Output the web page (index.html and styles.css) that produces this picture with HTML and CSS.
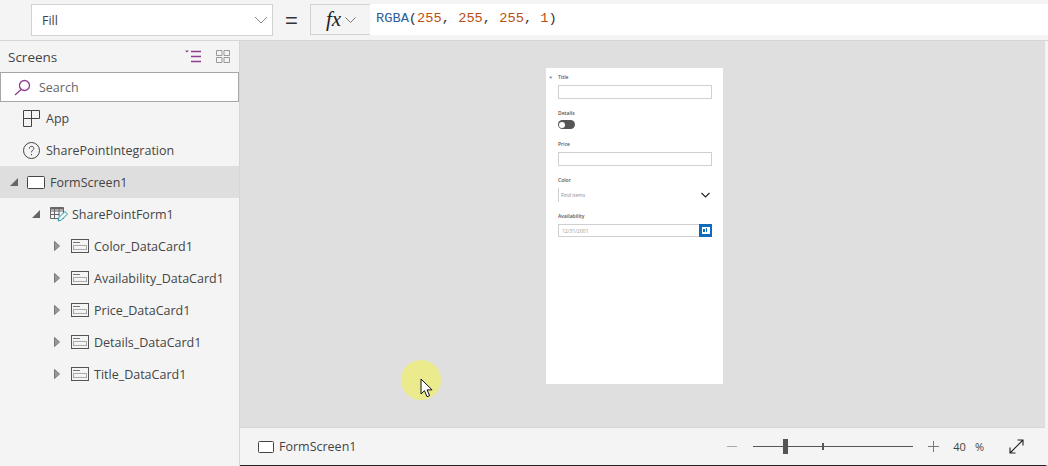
FILE: index.html
```html
<!DOCTYPE html>
<html lang="en">

<head>
    <meta charset="UTF-8">
    <title>FormScreen1</title>
    <link rel="stylesheet" href="styles.css">
</head>

<body>
    <header class="formula-bar">
        <div class="prop-select">
            <span>Fill</span>
            <svg class="chev" width="14" height="8" viewBox="0 0 14 8"><path d="M1 1l6 6 6-6" fill="none" stroke="#8a8a8a"/></svg>
        </div>
        <div class="equals">=</div>
        <div class="fx-btn">
            <span class="fx">fx</span>
            <svg width="11" height="6" viewBox="0 0 11 6"><path d="M.5.5l5 5 5-5" fill="none" stroke="#777"/></svg>
        </div>
        <div class="formula"><span class="fn">RGBA</span>(<span class="num">255</span>, <span class="num">255</span>, <span class="num">255</span>, <span class="num">1</span>)</div>
    </header>

    <div class="main">
        <aside class="sidebar">
            <div class="side-head">
                <span>Screens</span>
                <div class="view-icons">
                    <svg width="16" height="13" viewBox="0 0 16 13"><path d="M0 .5h4L2 2.5z" fill="#8e3d8e"/><path d="M6 1.5h10M6 6.5h10M6 11.5h10" stroke="#8e3d8e" stroke-width="1.4"/></svg>
                    <svg width="14" height="13" viewBox="0 0 14 13"><path d="M.5.5h5.5v5H.5zM8 .5h5.5v5H8zM.5 7.5h5.5v5H.5zM8 7.5h5.5v5H8z" fill="none" stroke="#999"/></svg>
                </div>
            </div>
            <div class="search">
                <svg width="17" height="17" viewBox="0 0 17 17"><circle cx="10.5" cy="6.5" r="5" fill="none" stroke="#8e3d8e" stroke-width="1.3"/><path d="M7 10.5L1 16" stroke="#8e3d8e" stroke-width="1.3"/></svg>
                <span>Search</span>
            </div>
            <ul class="tree">
                <li class="row lvl-0">
                    <svg class="ico" width="17" height="17" viewBox="0 0 17 17"><path d="M.5.5h8v8h-8zM8.5.5h8v8h-8zM.5 8.5h8v8h-8z" fill="none" stroke="#444"/></svg>
                    <span>App</span>
                </li>
                <li class="row lvl-0">
                    <svg class="ico" width="17" height="17" viewBox="0 0 17 17"><circle cx="8.5" cy="8.5" r="8" fill="none" stroke="#444"/><path d="M6.3 6.6c0-3 4.5-3 4.5-.2 0 1.800-2.300 1.800-2.300 4" fill="none" stroke="#444"/><path d="M8 12h1v1.300H8z" fill="#444"/></svg>
                    <span>SharePointIntegration</span>
                </li>
                <li class="row lvl-1 selected">
                    <svg class="tri" width="8" height="8" viewBox="0 0 8 8"><path d="M8 0v8H0z" fill="#666"/></svg>
                    <svg class="screen" width="18" height="13" viewBox="0 0 18 13"><rect x=".5" y=".5" width="17" height="12" rx="1" fill="#fff" stroke="#444"/></svg>
                    <span>FormScreen1</span>
                </li>
                <li class="row lvl-2">
                    <svg class="tri" width="8" height="8" viewBox="0 0 8 8"><path d="M8 0v8H0z" fill="#666"/></svg>
                    <svg class="form-ico" width="18" height="16" viewBox="0 0 18 16"><path d="M.5 1.500h13v11H.5zM.5 5h13M.5 8.500h9M4.500 1.500v11M9 1.500v9" fill="none" stroke="#666"/><path d="M.5 1.500h13v2H.5z" fill="#666"/><path d="M8 15l1-3.500 6-6 2.500 2.500-6 6z" fill="#f3f3f3" stroke="#1a9ba1"/></svg>
                    <span>SharePointForm1</span>
                </li>
                <li class="row lvl-3">
                    <svg class="tri-r" width="6" height="10" viewBox="0 0 6 10"><path d="M.5.5L5.500 5 .5 9.500z" fill="#999" stroke="#777"/></svg>
                    <svg class="card" width="18" height="14" viewBox="0 0 18 14"><rect x=".5" y=".5" width="17" height="13" fill="none" stroke="#555"/><path d="M2 3.500h7" stroke="#777"/><rect x="2.500" y="6.500" width="13" height="4" fill="none" stroke="#aaa"/></svg>
                    <span>Color_DataCard1</span>
                </li>
                <li class="row lvl-3">
                    <svg class="tri-r" width="6" height="10" viewBox="0 0 6 10"><path d="M.5.5L5.500 5 .5 9.500z" fill="#999" stroke="#777"/></svg>
                    <svg class="card" width="18" height="14" viewBox="0 0 18 14"><rect x=".5" y=".5" width="17" height="13" fill="none" stroke="#555"/><path d="M2 3.500h7" stroke="#777"/><rect x="2.500" y="6.500" width="13" height="4" fill="none" stroke="#aaa"/></svg>
                    <span>Availability_DataCard1</span>
                </li>
                <li class="row lvl-3">
                    <svg class="tri-r" width="6" height="10" viewBox="0 0 6 10"><path d="M.5.5L5.500 5 .5 9.500z" fill="#999" stroke="#777"/></svg>
                    <svg class="card" width="18" height="14" viewBox="0 0 18 14"><rect x=".5" y=".5" width="17" height="13" fill="none" stroke="#555"/><path d="M2 3.500h7" stroke="#777"/><rect x="2.500" y="6.500" width="13" height="4" fill="none" stroke="#aaa"/></svg>
                    <span>Price_DataCard1</span>
                </li>
                <li class="row lvl-3">
                    <svg class="tri-r" width="6" height="10" viewBox="0 0 6 10"><path d="M.5.5L5.500 5 .5 9.500z" fill="#999" stroke="#777"/></svg>
                    <svg class="card" width="18" height="14" viewBox="0 0 18 14"><rect x=".5" y=".5" width="17" height="13" fill="none" stroke="#555"/><path d="M2 3.500h7" stroke="#777"/><rect x="2.500" y="6.500" width="13" height="4" fill="none" stroke="#aaa"/></svg>
                    <span>Details_DataCard1</span>
                </li>
                <li class="row lvl-3">
                    <svg class="tri-r" width="6" height="10" viewBox="0 0 6 10"><path d="M.5.5L5.500 5 .5 9.500z" fill="#999" stroke="#777"/></svg>
                    <svg class="card" width="18" height="14" viewBox="0 0 18 14"><rect x=".5" y=".5" width="17" height="13" fill="none" stroke="#555"/><path d="M2 3.500h7" stroke="#777"/><rect x="2.500" y="6.500" width="13" height="4" fill="none" stroke="#aaa"/></svg>
                    <span>Title_DataCard1</span>
                </li>
            </ul>
        </aside>

        <section class="workspace">
            <div class="canvas">
                <form class="phone">
                    <div class="field first">
                        <span class="req">*</span>
                        <label class="title-label">Title</label>
                        <div class="input"></div>
                    </div>
                    <div class="field details">
                        <label>Details</label>
                        <div class="toggle"><i></i></div>
                    </div>
                    <div class="field price">
                        <label>Price</label>
                        <div class="input"></div>
                    </div>
                    <div class="field color">
                        <label>Color</label>
                        <div class="combo">
                            <span>Find items</span>
                            <svg width="9" height="6" viewBox="0 0 9 6"><path d="M.5 1l4 4 4-4" fill="none" stroke="#222" stroke-width="1.100"/></svg>
                        </div>
                    </div>
                    <div class="field avail">
                        <label>Availability</label>
                        <div class="date">
                            <span>12/31/2001</span>
                            <div class="cal"><svg width="8" height="7" viewBox="0 0 8 7"><path d="M0 0h8v7H0z" fill="#fff"/><path d="M1 2h2v3H1zM4 1h1v4H4z" fill="#0f6cbd"/></svg></div>
                        </div>
                    </div>
                </form>
                <div class="pointer-spot">
                    <svg width="13" height="20" viewBox="0 0 13 20"><path d="M1 1v15l3.500-3.300 2.500 6 2.600-1-2.500-5.800h5z" fill="#fff" stroke="#111"/></svg>
                </div>
            </div>
            <footer class="status">
                <div class="status-screen">
                    <svg width="16" height="12" viewBox="0 0 16 12"><rect x=".5" y=".5" width="15" height="11" rx="1" fill="#fff" stroke="#444"/></svg>
                    <span>FormScreen1</span>
                </div>
                <div class="zoom">
                    <span class="minus"></span>
                    <div class="slider"><i class="thumb"></i><i class="tick"></i></div>
                    <svg class="plus" width="11" height="11" viewBox="0 0 11 11"><path d="M5.500 0v11M0 5.500h11" stroke="#777"/></svg>
                    <span class="pct">40</span>
                    <span class="pct-sign">%</span>
                    <svg class="expand" width="15" height="15" viewBox="0 0 15 15"><path d="M1 14L14 1M8.500 1H14v5.500M1 8.500V14h5.500" fill="none" stroke="#222" stroke-width="1.100"/></svg>
                </div>
            </footer>
        </section>
    </div>
</body>

</html>
```

FILE: styles.css
```css
* {
    box-sizing: border-box;
}

html,
body {
    height: 100%;
}

body {
    margin: 0;
    display: flex;
    flex-direction: column;
    overflow: hidden;
    background-color: #f4f4f4;
    color: #444;
    font-family: "Open Sans", "Liberation Sans", sans-serif;
    font-size: 12.5px;
}

/* formula bar */
.formula-bar {
    display: flex;
    height: 41px;
    flex: none;
    padding: 4px 0 3px 31px;
    border-bottom: 1px solid #d6d6d6;
}

.prop-select {
    display: flex;
    justify-content: space-between;
    align-items: center;
    width: 242px;
    height: 32px;
    padding: 0 4px 0 10px;
    background-color: #fff;
    border: 1px solid #d2d2d2;
}

.equals {
    width: 37px;
    text-align: center;
    font-size: 22px;
    line-height: 34px;
    color: #333;
    font-family: "Liberation Sans", sans-serif;
}

.fx-btn {
    display: flex;
    align-items: center;
    gap: 4px;
    width: 60px;
    height: 31px;
    padding-left: 15px;
    border: 1px solid #d2d2d2;
    border-right: none;
}

.fx {
    font-family: "Liberation Serif", serif;
    font-style: italic;
    font-size: 21px;
    color: #222;
}

.formula {
    flex: 1;
    height: 31px;
    padding-left: 6px;
    background-color: #fff;
    color: #333;
    font-family: "Liberation Mono", monospace;
    font-size: 13.7px;
    line-height: 30px;
    font-weight: 400;
}

.fn {
    color: #2b5f9e;
}

.num {
    color: #b9500f;
}

.main {
    flex: 1;
    display: flex;
    min-height: 0;
}

/* left tree */
.sidebar {
    width: 240px;
    flex: none;
    border-right: 1px solid #d6d6d6;
}

.side-head {
    display: flex;
    justify-content: space-between;
    align-items: center;
    height: 31px;
    padding: 0 9px 0 8px;
    font-size: 13.5px;
}

.view-icons {
    display: flex;
    gap: 15px;
}

.search {
    display: flex;
    align-items: center;
    gap: 8px;
    height: 30px;
    padding: 0 0 0 13px;
    background-color: #fff;
    border: 1px solid #a6a6a6;
    color: #666;
    font-size: 12.5px;
}

.tree {
    list-style: none;
    margin: 0;
    padding: 0;
}

.row {
    display: flex;
    align-items: center;
    height: 32px;
}

.row span {
    white-space: nowrap;
}

.lvl-0 {
    padding-left: 23px;
    gap: 6px;
}

.lvl-1 {
    padding-left: 10px;
}

.lvl-1 .screen {
    margin-left: 9px;
    margin-right: 5px;
}

.selected {
    background-color: #dedede;
}

.lvl-2 {
    padding-left: 32px;
}

.lvl-2 .form-ico {
    margin-left: 10px;
    margin-right: 4px;
}

.lvl-3 {
    padding-left: 54px;
}

.lvl-3 .card {
    margin-left: 11px;
    margin-right: 5px;
}

/* canvas side */
.workspace {
    flex: 1;
    display: flex;
    flex-direction: column;
    min-width: 0;
    border-right: 3px solid #f4f4f4;
    border-bottom: 1px solid #222;
}

.canvas {
    position: relative;
    flex: 1;
    padding-top: 27px;
    padding-left: 306px;
    background-color: #dfdfdf;
    border-bottom: 1px solid #d6d6d6;
}

.phone {
    width: 177px;
    height: 316px;
    padding: 6px 11px 0 12px;
    background-color: #fff;
    font-size: 5px;
    color: #555;
}

.field {
    position: relative;
}

.field label {
    display: block;
    height: 7px;
    line-height: 7px;
    font-weight: 600;
}

.title-label {
    color: #2b5f9e;
}

.req {
    position: absolute;
    left: -9px;
    top: 0;
    color: #2b5f9e;
    font-size: 6px;
}

.input {
    height: 14px;
    margin-top: 4px;
    border: 1px solid #d0d0d0;
}

.details {
    margin-top: 11px;
}

.toggle {
    display: flex;
    align-items: center;
    width: 17px;
    height: 9px;
    margin-top: 3px;
    padding-left: 1px;
    border-radius: 5px;
    background-color: #555;
}

.toggle i {
    width: 6px;
    height: 6px;
    border-radius: 50%;
    background-color: #fff;
}

.price {
    margin-top: 12px;
}

.color {
    margin-top: 11px;
}

.combo {
    display: flex;
    justify-content: space-between;
    align-items: center;
    height: 14px;
    margin-top: 4px;
    padding: 0 2px 0 2px;
    border-left: 1px solid #d0d0d0;
    color: #888;
}

.avail {
    margin-top: 11px;
}

.date {
    display: flex;
    justify-content: space-between;
    align-items: center;
    height: 13px;
    margin-top: 4px;
    padding-left: 3px;
    border: 1px solid #d0d0d0;
    border-right: none;
    color: #999;
}

.cal {
    display: flex;
    justify-content: center;
    align-items: center;
    width: 13px;
    height: 13px;
    background-color: #0f6cbd;
}

/* cursor highlight over the canvas */
.pointer-spot {
    position: absolute;
    left: 161px;
    top: 319px;
    width: 40px;
    height: 40px;
    padding: 18px 0 0 19px;
    border-radius: 50%;
    background-color: #ebeb8e;
}

/* bottom bar */
.status {
    display: flex;
    justify-content: space-between;
    align-items: center;
    flex: none;
    height: 37px;
    padding: 0 21px 0 18px;
}

.status-screen {
    display: flex;
    align-items: center;
    gap: 5px;
}

.zoom {
    display: flex;
    align-items: center;
}

.minus {
    width: 10px;
    height: 1px;
    margin-right: 16px;
    background-color: #aaa;
}

.slider {
    position: relative;
    width: 160px;
    height: 1px;
    background-color: #555;
}

.thumb {
    position: absolute;
    left: 30px;
    top: -7px;
    width: 5px;
    height: 15px;
    background-color: #555;
}

.tick {
    position: absolute;
    left: 69px;
    top: -3px;
    width: 2px;
    height: 7px;
    background-color: #555;
}

.plus {
    margin-left: 15px;
}

.pct {
    margin-left: 14px;
    font-size: 11px;
}

.pct-sign {
    margin-left: 9px;
    font-size: 11px;
}

.expand {
    margin-left: 25px;
}
```
